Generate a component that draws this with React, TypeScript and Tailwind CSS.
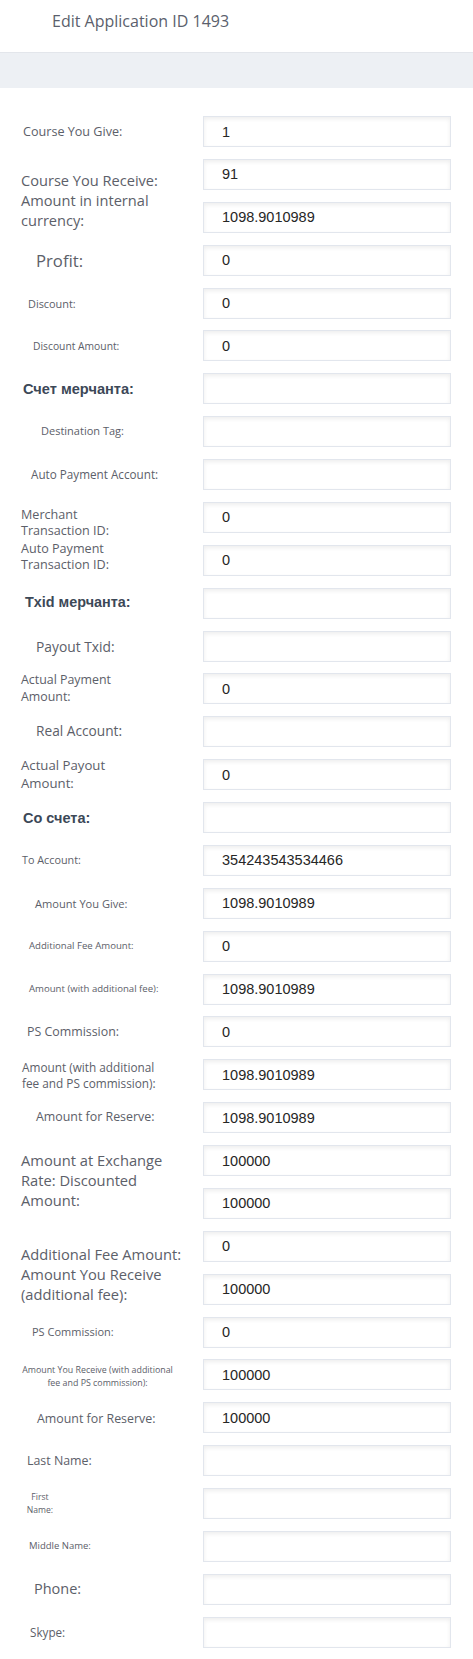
import { Fragment } from 'react';
import type { ReactNode } from 'react';

type Row = {
  lines: ReactNode[];
  cls: string;
  values: string[];
};

const label = "font-['Open_Sans',sans-serif] text-[#5c6069]";
const bold = "font-['Liberation_Sans',Arial,sans-serif] font-bold text-[#3c4857]";

const rows: Row[] = [
  { lines: ['Course You Give:'], cls: `${label} pl-[23px] text-[12.6px] translate-y-[1px]`, values: ['1'] },
  {
    lines: ['Course You Receive:', 'Amount in internal', 'currency:'],
    cls: `${label} pl-[21px] text-[14.6px] leading-[20px] translate-y-[4px]`,
    values: ['91', '1098.9010989'],
  },
  { lines: ['Profit:'], cls: `${label} pl-[36px] text-[16.7px]`, values: ['0'] },
  { lines: ['Discount:'], cls: `${label} pl-[28px] text-[10.9px] translate-y-[1px]`, values: ['0'] },
  { lines: ['Discount Amount:'], cls: `${label} pl-[33px] text-[10.3px] translate-y-[1px]`, values: ['0'] },
  { lines: ['Счет мерчанта:'], cls: `${bold} pl-[23px] text-[14.6px] translate-y-[1px]`, values: [''] },
  { lines: ['Destination Tag:'], cls: `${label} pl-[41px] text-[11px]`, values: [''] },
  { lines: ['Auto Payment Account:'], cls: `${label} pl-[31px] text-[11.7px]`, values: [''] },
  {
    lines: ['Merchant', 'Transaction ID:'],
    cls: `${label} pl-[21px] text-[12.6px] leading-[16.7px] translate-y-[6px]`,
    values: ['0'],
  },
  {
    lines: ['Auto Payment', 'Transaction ID:'],
    cls: `${label} pl-[21px] text-[12.6px] leading-[16.7px] -translate-y-[3px]`,
    values: ['0'],
  },
  { lines: ['Txid мерчанта:'], cls: `${bold} pl-[25px] text-[14.4px]`, values: [''] },
  { lines: ['Payout Txid:'], cls: `${label} pl-[36px] text-[13.8px] translate-y-[1px]`, values: [''] },
  {
    lines: ['Actual Payment', 'Amount:'],
    cls: `${label} pl-[21px] text-[12.4px] leading-[16.7px]`,
    values: ['0'],
  },
  { lines: ['Real Account:'], cls: `${label} pl-[36px] text-[13.7px]`, values: [''] },
  {
    lines: ['Actual Payout', 'Amount:'],
    cls: `${label} pl-[21px] text-[13.2px] leading-[17.6px]`,
    values: ['0'],
  },
  { lines: ['Со счета:'], cls: `${bold} pl-[23px] text-[14.5px] translate-y-[1px]`, values: [''] },
  { lines: ['To Account:'], cls: `${label} pl-[22px] text-[10.8px]`, values: ['354243543534466'] },
  { lines: ['Amount You Give:'], cls: `${label} pl-[35px] text-[11.1px] translate-y-[1px]`, values: ['1098.9010989'] },
  { lines: ['Additional Fee Amount:'], cls: `${label} pl-[29px] text-[9.6px]`, values: ['0'] },
  { lines: ['Amount (with additional fee):'], cls: `${label} pl-[29px] text-[9.6px]`, values: ['1098.9010989'] },
  { lines: ['PS Commission:'], cls: `${label} pl-[27px] text-[12.4px]`, values: ['0'] },
  {
    lines: ['Amount (with additional', 'fee and PS commission):'],
    cls: `${label} pl-[22px] text-[11.8px] leading-[16px]`,
    values: ['1098.9010989'],
  },
  { lines: ['Amount for Reserve:'], cls: `${label} pl-[36px] text-[12.4px]`, values: ['1098.9010989'] },
  {
    lines: ['Amount at Exchange', 'Rate: Discounted', 'Amount:'],
    cls: `${label} pl-[21px] text-[14.7px] leading-[20px] -translate-y-[2px]`,
    values: ['100000', '100000'],
  },
  {
    lines: ['Additional Fee Amount:', 'Amount You Receive', '(additional fee):'],
    cls: `${label} pl-[21px] text-[14.7px] leading-[20px] translate-y-[6px]`,
    values: ['0', '100000'],
  },
  { lines: ['PS Commission:'], cls: `${label} pl-[32px] text-[11px]`, values: ['0'] },
  {
    lines: ['Amount You Receive (with additional', 'fee and PS commission):'],
    cls: `${label} pl-[21px] w-[174px] text-center text-[8.85px] leading-[13px] translate-y-[2px]`,
    values: ['100000'],
  },
  { lines: ['Amount for Reserve:'], cls: `${label} pl-[37px] text-[12.4px] translate-y-[2px]`, values: ['100000'] },
  { lines: ['Last Name:'], cls: `${label} pl-[27px] text-[12.4px] translate-y-[1px]`, values: [''] },
  {
    lines: ['First', 'Name:'],
    cls: `${label} pl-[26px] w-[54px] text-center text-[8.6px] leading-[12.7px]`,
    values: [''],
  },
  { lines: ['Middle Name:'], cls: `${label} pl-[29px] text-[9.5px]`, values: [''] },
  { lines: ['Phone:'], cls: `${label} pl-[34px] text-[14.5px]`, values: [''] },
  { lines: ['Skype:'], cls: `${label} pl-[30px] text-[11.7px] translate-y-[1px]`, values: [''] },
];

function Field({ value }: { value: string }) {
  return (
    <input
      readOnly
      value={value}
      className="col-start-2 h-[31px] w-full border border-[#e2e6ed] bg-white pl-[18px] font-['Liberation_Sans',Arial,sans-serif] text-[14.5px] text-[#262626] shadow-[inset_0_2px_4px_rgba(0,0,0,0.07)] outline-none"
    />
  );
}

export default function App() {
  return (
    <div className="min-h-screen w-[473px] bg-white">
      <header className="h-[53px] border-b border-[#e3e6eb] pl-[52px] pt-[9.5px]">
        <h1 className="font-['Open_Sans',sans-serif] text-[16px] leading-[22px] text-[#5b5f6d]">
          Edit Application ID 1493
        </h1>
      </header>
      <div className="h-[35px] bg-[#edf0f4]" />

      <form className="grid grid-cols-[203px_248px] auto-rows-[31px] gap-y-[11.886px] pt-[28px] pb-[11px]">
        {rows.map((row, i) => (
          <Fragment key={i}>
            <div className={`col-start-1 flex items-center ${row.values.length > 1 ? 'row-span-2' : ''}`}>
              <div className={row.cls}>
                {row.lines.map((line, j) => (
                  <div key={j} className="whitespace-nowrap">
                    {line}
                  </div>
                ))}
              </div>
            </div>
            {row.values.map((v, j) => (
              <Field key={j} value={v} />
            ))}
          </Fragment>
        ))}
      </form>
    </div>
  );
}
